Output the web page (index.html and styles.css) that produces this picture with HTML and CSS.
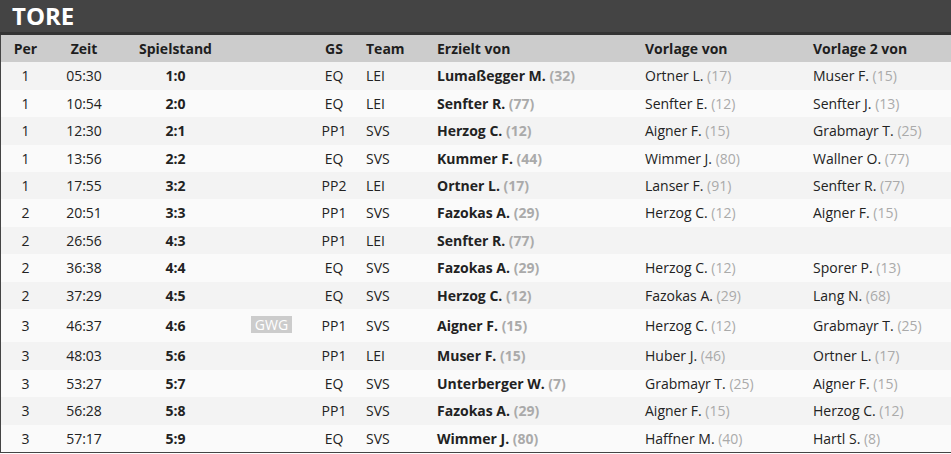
FILE: index.html
```html
<!DOCTYPE html>
<html lang="de">
<head>
<meta charset="utf-8">
<title>Tore</title>
<link rel="stylesheet" href="styles.css">
</head>
<body>
<div class="panel">
  <h2 class="title">TORE</h2>
  <table class="goals">
    <colgroup>
      <col class="c-per"><col class="c-zeit"><col class="c-stand"><col class="c-tag"><col class="c-gs"><col class="c-team"><col class="c-scorer"><col class="c-a1"><col class="c-a2">
    </colgroup>
    <thead>
      <tr>
        <th class="ctr">Per</th><th class="ctr">Zeit</th><th class="ctr">Spielstand</th><th></th><th class="ctr">GS</th><th>Team</th><th>Erzielt von</th><th>Vorlage von</th><th>Vorlage 2 von</th>
      </tr>
    </thead>
    <tbody>
      <tr><td class="ctr">1</td><td class="ctr">05:30</td><td class="ctr b">1:0</td><td></td><td class="ctr">EQ</td><td>LEI</td><td class="b">Lumaßegger M. <span class="num">(32)</span></td><td>Ortner L. <span class="num">(17)</span></td><td>Muser F. <span class="num">(15)</span></td></tr>
      <tr><td class="ctr">1</td><td class="ctr">10:54</td><td class="ctr b">2:0</td><td></td><td class="ctr">EQ</td><td>LEI</td><td class="b">Senfter R. <span class="num">(77)</span></td><td>Senfter E. <span class="num">(12)</span></td><td>Senfter J. <span class="num">(13)</span></td></tr>
      <tr><td class="ctr">1</td><td class="ctr">12:30</td><td class="ctr b">2:1</td><td></td><td class="ctr">PP1</td><td>SVS</td><td class="b">Herzog C. <span class="num">(12)</span></td><td>Aigner F. <span class="num">(15)</span></td><td>Grabmayr T. <span class="num">(25)</span></td></tr>
      <tr><td class="ctr">1</td><td class="ctr">13:56</td><td class="ctr b">2:2</td><td></td><td class="ctr">EQ</td><td>SVS</td><td class="b">Kummer F. <span class="num">(44)</span></td><td>Wimmer J. <span class="num">(80)</span></td><td>Wallner O. <span class="num">(77)</span></td></tr>
      <tr><td class="ctr">1</td><td class="ctr">17:55</td><td class="ctr b">3:2</td><td></td><td class="ctr">PP2</td><td>LEI</td><td class="b">Ortner L. <span class="num">(17)</span></td><td>Lanser F. <span class="num">(91)</span></td><td>Senfter R. <span class="num">(77)</span></td></tr>
      <tr><td class="ctr">2</td><td class="ctr">20:51</td><td class="ctr b">3:3</td><td></td><td class="ctr">PP1</td><td>SVS</td><td class="b">Fazokas A. <span class="num">(29)</span></td><td>Herzog C. <span class="num">(12)</span></td><td>Aigner F. <span class="num">(15)</span></td></tr>
      <tr><td class="ctr">2</td><td class="ctr">26:56</td><td class="ctr b">4:3</td><td></td><td class="ctr">PP1</td><td>LEI</td><td class="b">Senfter R. <span class="num">(77)</span></td><td></td><td></td></tr>
      <tr><td class="ctr">2</td><td class="ctr">36:38</td><td class="ctr b">4:4</td><td></td><td class="ctr">EQ</td><td>SVS</td><td class="b">Fazokas A. <span class="num">(29)</span></td><td>Herzog C. <span class="num">(12)</span></td><td>Sporer P. <span class="num">(13)</span></td></tr>
      <tr><td class="ctr">2</td><td class="ctr">37:29</td><td class="ctr b">4:5</td><td></td><td class="ctr">EQ</td><td>SVS</td><td class="b">Herzog C. <span class="num">(12)</span></td><td>Fazokas A. <span class="num">(29)</span></td><td>Lang N. <span class="num">(68)</span></td></tr>
      <tr><td class="ctr">3</td><td class="ctr">46:37</td><td class="ctr b">4:6</td><td class="ctr tagcell"><span class="tag">GWG</span></td><td class="ctr">PP1</td><td>SVS</td><td class="b">Aigner F. <span class="num">(15)</span></td><td>Herzog C. <span class="num">(12)</span></td><td>Grabmayr T. <span class="num">(25)</span></td></tr>
      <tr><td class="ctr">3</td><td class="ctr">48:03</td><td class="ctr b">5:6</td><td></td><td class="ctr">PP1</td><td>LEI</td><td class="b">Muser F. <span class="num">(15)</span></td><td>Huber J. <span class="num">(46)</span></td><td>Ortner L. <span class="num">(17)</span></td></tr>
      <tr><td class="ctr">3</td><td class="ctr">53:27</td><td class="ctr b">5:7</td><td></td><td class="ctr">EQ</td><td>SVS</td><td class="b">Unterberger W. <span class="num">(7)</span></td><td>Grabmayr T. <span class="num">(25)</span></td><td>Aigner F. <span class="num">(15)</span></td></tr>
      <tr><td class="ctr">3</td><td class="ctr">56:28</td><td class="ctr b">5:8</td><td></td><td class="ctr">PP1</td><td>SVS</td><td class="b">Fazokas A. <span class="num">(29)</span></td><td>Aigner F. <span class="num">(15)</span></td><td>Herzog C. <span class="num">(12)</span></td></tr>
      <tr><td class="ctr">3</td><td class="ctr">57:17</td><td class="ctr b">5:9</td><td></td><td class="ctr">EQ</td><td>SVS</td><td class="b">Wimmer J. <span class="num">(80)</span></td><td>Haffner M. <span class="num">(40)</span></td><td>Hartl S. <span class="num">(8)</span></td></tr>
    </tbody>
  </table>
</div>
</body>
</html>
```
FILE: styles.css
```css
html, body {
  margin: 0;
  padding: 0;
  background: #ffffff;
}
body {
  font-family: "Open Sans", "Liberation Sans", sans-serif;
  font-size: 14px;
  color: #222222;
}
.panel {
  width: 951px;
  border-left: 1px solid #444444;
  border-bottom: 1px solid #444444;
  box-sizing: border-box;
}
.title {
  margin: 0 0 0 -1px;
  height: 32px;
  padding: 0 0 0 12px;
  background: #444444;
  border-bottom: 3px solid #333333;
  color: #ffffff;
  font-size: 24px;
  font-weight: 700;
  line-height: 32px;
}
.goals {
  width: 950px;
  border-collapse: collapse;
  table-layout: fixed;
}
.c-per { width: 49px; }
.c-zeit { width: 68px; }
.c-stand { width: 115px; }
.c-tag { width: 77px; }
.c-gs { width: 48px; }
.c-team { width: 71px; }
.c-scorer { width: 208px; }
.c-a1 { width: 168px; }
.c-a2 { width: 146px; }
.goals th,
.goals td {
  padding: 4px 8px;
  line-height: 19.4px;
  text-align: left;
  white-space: nowrap;
  overflow: hidden;
}
.goals thead th {
  background: #cccccc;
  font-weight: 700;
  color: #1e1e1e;
}
.goals tbody tr:nth-child(odd) { background: #f3f3f3; }
.goals tbody tr:nth-child(even) { background: #fafafa; }
.goals .ctr { text-align: center; }
.goals .b { font-weight: 700; }
.num { color: #aaaaaa; }
.goals td.tagcell { padding-top: 7px; padding-bottom: 7px; }
.tag {
  display: inline-block;
  vertical-align: top;
  background: #cccccc;
  color: #ffffff;
  padding: 0 4px;
  line-height: 17px;
  font-weight: 400;
}
```
